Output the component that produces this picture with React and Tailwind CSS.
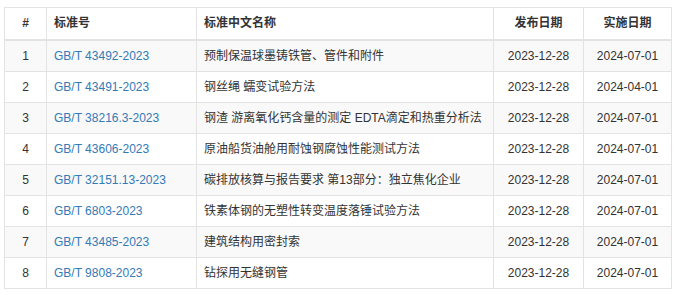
import React from 'react';

const rows = [
  { no: 'GB/T 43492-2023', name: '预制保温球墨铸铁管、管件和附件', pub: '2023-12-28', impl: '2024-07-01' },
  { no: 'GB/T 43491-2023', name: '钢丝绳 蠕变试验方法', pub: '2023-12-28', impl: '2024-04-01' },
  { no: 'GB/T 38216.3-2023', name: '钢渣 游离氧化钙含量的测定 EDTA滴定和热重分析法', pub: '2023-12-28', impl: '2024-07-01' },
  { no: 'GB/T 43606-2023', name: '原油船货油舱用耐蚀钢腐蚀性能测试方法', pub: '2023-12-28', impl: '2024-07-01' },
  { no: 'GB/T 32151.13-2023', name: '碳排放核算与报告要求 第13部分：独立焦化企业', pub: '2023-12-28', impl: '2024-07-01' },
  { no: 'GB/T 6803-2023', name: '铁素体钢的无塑性转变温度落锤试验方法', pub: '2023-12-28', impl: '2024-07-01' },
  { no: 'GB/T 43485-2023', name: '建筑结构用密封索', pub: '2023-12-28', impl: '2024-07-01' },
  { no: 'GB/T 9808-2023', name: '钻探用无缝钢管', pub: '2023-12-28', impl: '2024-07-01' },
];

export default function App() {
  return (
    <div
      className="bg-white pt-[7px] pl-[4px] pr-[5px] text-[12px] text-[#333]"
      style={{ fontFamily: '"Liberation Sans", Arial, "Noto Sans CJK SC", sans-serif' }}
    >
      <table className="w-[667px] table-fixed border-collapse border border-[#e3e3e3]">
        <thead>
          <tr className="bg-white">
            <th className="w-[42px] border border-b-2 border-[#e3e3e3] py-[7px] text-center font-bold leading-[17px]">#</th>
            <th className="w-[150px] border border-b-2 border-[#e3e3e3] px-[7px] py-[7px] text-left font-bold leading-[17px]">标准号</th>
            <th className="w-[297px] border border-b-2 border-[#e3e3e3] px-[7px] py-[7px] text-left font-bold leading-[17px]">标准中文名称</th>
            <th className="w-[90px] border border-b-2 border-[#e3e3e3] py-[7px] text-center font-bold leading-[17px]">发布日期</th>
            <th className="w-[88px] border border-b-2 border-[#e3e3e3] py-[7px] text-center font-bold leading-[17px]">实施日期</th>
          </tr>
        </thead>
        <tbody>
          {rows.map((r, i) => (
            <tr key={r.no} className={i % 2 === 0 ? 'bg-[#f9f9f9]' : 'bg-white'}>
              <td className="border border-[#e3e3e3] py-[7px] text-center leading-[16px]">{i + 1}</td>
              <td className="border border-[#e3e3e3] px-[7px] py-[7px] leading-[16px]">
                <a href="#" className="text-[#337ab7]">{r.no}</a>
              </td>
              <td className="whitespace-nowrap border border-[#e3e3e3] px-[7px] py-[7px] leading-[16px]">{r.name}</td>
              <td className="border border-[#e3e3e3] py-[7px] text-center leading-[16px]">{r.pub}</td>
              <td className="border border-[#e3e3e3] py-[7px] text-center leading-[16px]">{r.impl}</td>
            </tr>
          ))}
        </tbody>
      </table>
    </div>
  );
}
